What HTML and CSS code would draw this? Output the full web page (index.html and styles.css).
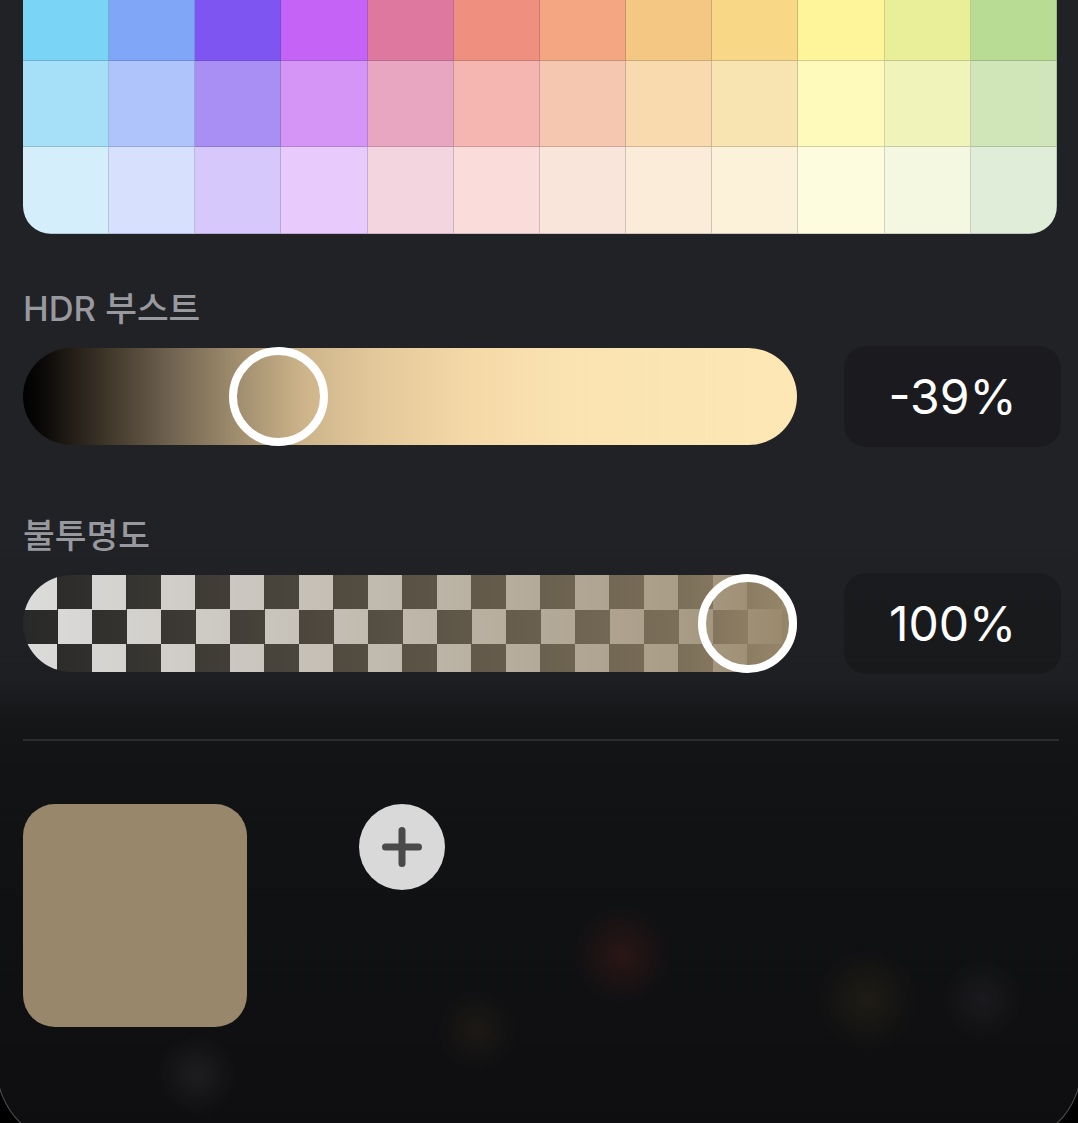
FILE: index.html
```html
<!DOCTYPE html>
<html lang="ko">
<head>
  <meta charset="UTF-8" />
  <meta name="viewport" content="width=device-width, initial-scale=1.0"/>
  <title>색상</title>
  <link rel="stylesheet" href="styles.css">
</head>
<body>
  <div class="sheet">
    <div class="palette">
      <div class="cell" style="background:#79d4f6"></div>
      <div class="cell" style="background:#7fa6f7"></div>
      <div class="cell" style="background:#7f55f2"></div>
      <div class="cell" style="background:#c463f5"></div>
      <div class="cell" style="background:#de789f"></div>
      <div class="cell" style="background:#ef8f80"></div>
      <div class="cell" style="background:#f4a682"></div>
      <div class="cell" style="background:#f4c783"></div>
      <div class="cell" style="background:#f8d886"></div>
      <div class="cell" style="background:#fef59a"></div>
      <div class="cell" style="background:#e9ef98"></div>
      <div class="cell" style="background:#b8dc93"></div>

      <div class="cell" style="background:#a5e0f8"></div>
      <div class="cell" style="background:#aec4fb"></div>
      <div class="cell" style="background:#a98ef3"></div>
      <div class="cell" style="background:#d595f6"></div>
      <div class="cell" style="background:#e9a6c1"></div>
      <div class="cell" style="background:#f5b5b0"></div>
      <div class="cell" style="background:#f5c6b0"></div>
      <div class="cell" style="background:#f9d9ae"></div>
      <div class="cell" style="background:#f8e4b0"></div>
      <div class="cell" style="background:#fefabc"></div>
      <div class="cell" style="background:#f0f4bb"></div>
      <div class="cell" style="background:#d0e6b9"></div>

      <div class="cell" style="background:#d4eefb"></div>
      <div class="cell" style="background:#d7e1fd"></div>
      <div class="cell" style="background:#d6c8fb"></div>
      <div class="cell" style="background:#e8cafc"></div>
      <div class="cell" style="background:#f2d5df"></div>
      <div class="cell" style="background:#fadcdb"></div>
      <div class="cell" style="background:#fae5db"></div>
      <div class="cell" style="background:#fbecd9"></div>
      <div class="cell" style="background:#fcf2da"></div>
      <div class="cell" style="background:#fefcdf"></div>
      <div class="cell" style="background:#f4f8e1"></div>
      <div class="cell" style="background:#e0eed9"></div>
    </div>

    <section class="control control-hdr">
      <div class="control-label">HDR 부스트</div>
      <div class="control-row">
        <div class="track track-hdr">
          <span class="thumb" style="--v:0.305"></span>
        </div>
        <div class="value">-39%</div>
      </div>
    </section>

    <section class="control control-opacity">
      <div class="control-label">불투명도</div>
      <div class="control-row">
        <div class="track track-opacity">
          <span class="thumb" style="--v:1"></span>
        </div>
        <div class="value">100%</div>
      </div>
    </section>

    <div class="divider"></div>

    <div class="swatches">
      <div class="swatch" style="background:#98876a"></div>
      <button class="add" aria-label="추가">
        <svg width="42" height="42" viewBox="0 0 42 42">
          <path d="M21 4.5v33M4.5 21h33" stroke="#4a4a4b" stroke-width="7" stroke-linecap="round" fill="none"/>
        </svg>
      </button>
    </div>
  </div>
</body>
</html>
```

FILE: styles.css
```css
html {
  background: #000;
}
body {
  margin: 0;
  overflow: hidden;
  font-family: 'Inter', 'Noto Sans CJK KR', sans-serif;
  color: #fff;
}
.sheet {
  box-sizing: border-box;
  height: 1186px;
  margin: -40px -4px 0;
  padding: 15px 24px 0 26px;
  border: 1.5px solid rgba(255,255,255,0.28);
  border-top: none;
  border-radius: 0 0 80px 80px;
  background:
    radial-gradient(circle at 625px 995px, rgba(110,35,30,0.28), transparent 48px),
    radial-gradient(circle at 480px 1070px, rgba(90,70,40,0.18), transparent 40px),
    radial-gradient(circle at 870px 1040px, rgba(85,70,30,0.22), transparent 50px),
    radial-gradient(circle at 985px 1040px, rgba(90,90,100,0.14), transparent 40px),
    radial-gradient(circle at 200px 1115px, rgba(120,120,120,0.14), transparent 40px),
    linear-gradient(to bottom, #212226 0, #212226 560px, #1e1f22 720px, #151618 760px, #121315 810px, #0e0e10 1186px);
}

/* palette */
.palette {
  display: grid;
  grid-template-columns: repeat(12, 1fr);
  grid-template-rows: 86px 86px 87px;
  border-radius: 0 0 28px 28px;
  overflow: hidden;
}
.cell {
  box-shadow: inset -1px -1px 0 rgba(60,60,80,0.22);
}

/* sliders */
.control-hdr {
  margin-top: 55px;
}
.control-opacity {
  margin-top: 69px;
}
.control-label {
  font-size: 34.5px;
  line-height: 40px;
  font-weight: 500;
  color: #98999e;
}
.control-row {
  display: flex;
  align-items: center;
  gap: 47px;
  margin-top: 17px;
  height: 101px;
}
.track {
  position: relative;
  flex: none;
  width: 774px;
  height: 97px;
  border-radius: 48.5px;
}
.track-hdr {
  background: linear-gradient(to right, #000 0%, #0d0b09 3%, #3a3126 10%, #6f624f 19%, #9c8a6c 27%, #ccb389 36%, #e2c79a 45%, #f5d9a7 58%, #fae3b1 70%, #fce7b5 100%);
}
.track-opacity {
  background:
    linear-gradient(to right, rgba(152,135,106,0) 0%, rgba(152,135,106,0.75) 85%, #98876a 100%),
    repeating-conic-gradient(#282828 0 25%, #dcdcdc 0 50%) 0 0 / 69px 69px;
}
.thumb {
  position: absolute;
  top: -1px;
  left: calc(var(--v) * (100% - 99px));
  box-sizing: border-box;
  width: 99px;
  height: 99px;
  border: 8.5px solid #fff;
  border-radius: 50%;
}
.value {
  flex: none;
  width: 217px;
  height: 101px;
  border-radius: 22px;
  background: rgba(0,0,0,0.18);
  display: flex;
  align-items: center;
  justify-content: center;
  font-size: 48px;
  font-weight: 400;
}

.divider {
  height: 2px;
  margin: 65px -2px 0 0;
  background: #2c2d31;
}

/* saved colours */
.swatches {
  display: flex;
  align-items: flex-start;
  gap: 112px;
  margin-top: 63px;
}
.swatch {
  width: 224px;
  height: 223px;
  border-radius: 32px;
}
.add {
  width: 86px;
  height: 86px;
  padding: 0;
  border: none;
  border-radius: 50%;
  background: #d9d9d9;
  display: flex;
  align-items: center;
  justify-content: center;
}
```
